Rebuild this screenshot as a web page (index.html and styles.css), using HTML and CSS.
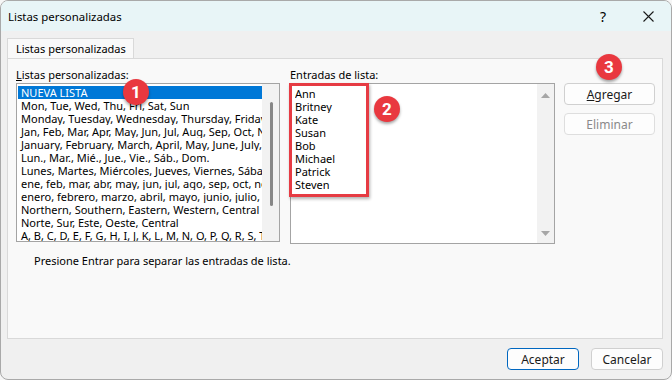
FILE: index.html
```html
<!DOCTYPE html>
<html lang="es">
<head>
    <meta charset="UTF-8">
    <title>Listas personalizadas</title>
    <link rel="stylesheet" href="styles.css">
</head>
<body>
    <div class="dialog">
        <div class="titlebar">
            <span class="title">Listas personalizadas</span>
            <span class="help">?</span>
            <span class="close">
                <svg width="11" height="11" viewBox="0 0 11 11"><path d="M0.5 0.5 L10.5 10.5 M10.5 0.5 L0.5 10.5" stroke="#1a1a1a" stroke-width="1.1" fill="none"/></svg>
            </span>
        </div>
        <div class="content">
            <div class="tabs">
                <div class="tab">Listas personalizadas</div>
            </div>
            <div class="panel">
                <div class="columns">
                    <div class="col col-lists">
                        <div class="label"><u>L</u>istas personalizadas:</div>
                        <div class="listbox lists">
                            <div class="items">
                                <div class="row selected">NUEVA LISTA</div>
                                <div class="row">Mon, Tue, Wed, Thu, Fri, Sat, Sun</div>
                                <div class="row">Monday, Tuesday, Wednesday, Thursday, Friday, Saturday, Sunday</div>
                                <div class="row">Jan, Feb, Mar, Apr, May, Jun, Jul, Aug, Sep, Oct, Nov, Dec</div>
                                <div class="row">January, February, March, April, May, June, July, August, September</div>
                                <div class="row">Lun., Mar., Mié., Jue., Vie., Sáb., Dom.</div>
                                <div class="row">Lunes, Martes, Miércoles, Jueves, Viernes, Sábado, Domingo</div>
                                <div class="row">ene, feb, mar, abr, may, jun, jul, ago, sep, oct, nov, dic</div>
                                <div class="row">enero, febrero, marzo, abril, mayo, junio, julio, agosto</div>
                                <div class="row">Northern, Southern, Eastern, Western, Central</div>
                                <div class="row">Norte, Sur, Este, Oeste, Central</div>
                                <div class="row">A, B, C, D, E, F, G, H, I, J, K, L, M, N, O, P, Q, R, S, T, U</div>
                            </div>
                            <div class="vscroll thin">
                                <div class="thumb"></div>
                            </div>
                        </div>
                    </div>
                    <div class="col col-entries">
                        <div class="label">Entradas de lista:</div>
                        <div class="listbox entries">
                            <div class="items">
                                <div class="row">Ann</div>
                                <div class="row">Britney</div>
                                <div class="row">Kate</div>
                                <div class="row">Susan</div>
                                <div class="row">Bob</div>
                                <div class="row">Michael</div>
                                <div class="row">Patrick</div>
                                <div class="row">Steven</div>
                            </div>
                            <div class="vscroll arrows">
                                <svg width="9" height="5" viewBox="0 0 9 5"><path d="M0 5 L4.5 0 L9 5 Z" fill="#a6a6a6"/></svg>
                                <svg width="9" height="5" viewBox="0 0 9 5"><path d="M0 0 L9 0 L4.5 5 Z" fill="#a6a6a6"/></svg>
                            </div>
                        </div>
                    </div>
                    <div class="col col-buttons">
                        <button class="btn"><u>A</u>gregar</button>
                        <button class="btn" disabled>Eliminar</button>
                    </div>
                </div>
                <p class="hint">Presione Entrar para separar las entradas de lista.</p>

                <!-- callouts -->
                <div class="callout-box"></div>
                <span class="badge badge-1">1</span>
                <span class="badge badge-2">2</span>
                <span class="badge badge-3">3</span>
            </div>
            <div class="footer">
                <button class="btn btn-default">Aceptar</button>
                <button class="btn">Cancelar</button>
            </div>
        </div>
    </div>
</body>
</html>
```

FILE: styles.css
```css
body {
    margin: 0;
    background-color: #f6f6f6;
    font-family: 'Noto Sans', 'Liberation Sans', sans-serif;
    color: #000;
}
.dialog {
    width: 672px;
    height: 380px;
    box-sizing: border-box;
    border: 1px solid #a9a9a9;
    border-radius: 8px;
    background-color: #f0f0f0;
    overflow: hidden;
    display: flex;
    flex-direction: column;
}
.titlebar {
    height: 30px;
    flex-shrink: 0;
    display: flex;
    align-items: center;
    background-color: #e8f5f7;
    font-size: 11.4px;
}
.title {
    padding-left: 7px;
    flex: 1;
}
.help {
    font-size: 14px;
    width: 20px;
    text-align: center;
    margin-right: 24px;
}
.close {
    width: 22px;
    display: flex;
    justify-content: center;
    margin-right: 12px;
}
.content {
    flex: 1;
    padding: 7px 8px 0 6px;
}
.tabs {
    display: flex;
}
.tab {
    width: 127px;
    height: 21px;
    box-sizing: border-box;
    border: 1px solid #d9d9d9;
    border-bottom: none;
    background-color: #f9f9f9;
    font-size: 11px;
    line-height: 20px;
    white-space: nowrap;
    padding-left: 8px;
    margin-bottom: -1px;
    position: relative;
}
.panel {
    position: relative;
    height: 281px;
    box-sizing: border-box;
    border: 1px solid #d9d9d9;
    background-color: #f9f9f9;
    padding: 8px 7px 0 8px;
}
.columns {
    display: flex;
}
.col-lists {
    width: 264px;
}
.col-entries {
    width: 265px;
    margin-left: 10px;
}
.col-buttons {
    width: 91px;
    margin-left: 9px;
    padding-top: 16px;
    display: flex;
    flex-direction: column;
    gap: 8px;
}
.label {
    font-size: 11px;
    line-height: 16px;
    height: 16px;
}
.listbox {
    display: flex;
    box-sizing: border-box;
    border: 1px solid #a4a4a4;
    background-color: #fff;
    font-size: 11px;
}
.listbox.lists {
    height: 159px;
}
.listbox.entries {
    height: 161px;
}
.items {
    flex: 1;
    min-width: 0;
    overflow: hidden;
}
.lists .items {
    padding: 2px 0 0 1px;
}
.entries .items {
    padding: 3px 0 0 4px;
}
.row {
    height: 13px;
    line-height: 13px;
    white-space: nowrap;
    overflow: hidden;
}
.lists .row {
    padding-left: 3px;
}
.row.selected {
    background-color: #0078d7;
    color: #fff;
}
.vscroll {
    width: 17px;
    flex-shrink: 0;
    background-color: #f2f2f2;
    display: flex;
    flex-direction: column;
    align-items: center;
}
.vscroll.thin {
    padding-top: 18px;
}
.vscroll .thumb {
    width: 3px;
    height: 104px;
    border-radius: 2px;
    background-color: #878787;
    margin-left: 2px;
}
.vscroll.arrows {
    justify-content: space-between;
    padding: 9px 0 7px;
    box-sizing: border-box;
}
.btn {
    height: 22px;
    box-sizing: border-box;
    border: 1px solid #d0d0d0;
    border-radius: 4px;
    background-color: #fdfdfd;
    font-family: 'Noto Sans', 'Liberation Sans', sans-serif;
    font-size: 12px;
    color: #1a1a1a;
    padding: 0;
}
.btn:disabled {
    color: #8a8a8a;
    border-color: #dedede;
}
.col-buttons .btn {
    width: 91px;
}
.hint {
    margin: 9px 0 0 18px;
    font-size: 11px;
    line-height: 16px;
}
.footer {
    display: flex;
    justify-content: flex-end;
    gap: 12px;
    padding-top: 9px;
}
.footer .btn {
    width: 72px;
}
.btn-default {
    border-color: #0067c0;
}

/* Callouts over the dialog */
.callout-box {
    position: absolute;
    left: 281px;
    top: 24px;
    width: 80px;
    height: 114px;
    box-sizing: border-box;
    border: 3px solid #e63b43;
    box-shadow: 1px 2px 3px rgba(0, 0, 0, 0.3);
}
.badge {
    position: absolute;
    width: 26px;
    height: 26px;
    border-radius: 50%;
    background-color: #e9383f;
    color: #fff;
    font-family: 'Roboto', 'Noto Sans', sans-serif;
    font-weight: 700;
    font-size: 17px;
    line-height: 26px;
    text-align: center;
    box-shadow: 0 2px 3px rgba(0, 0, 0, 0.35);
}
.badge-1 {
    left: 115px;
    top: 20px;
}
.badge-2 {
    left: 366px;
    top: 37px;
}
.badge-3 {
    left: 588px;
    top: -5px;
}
```
